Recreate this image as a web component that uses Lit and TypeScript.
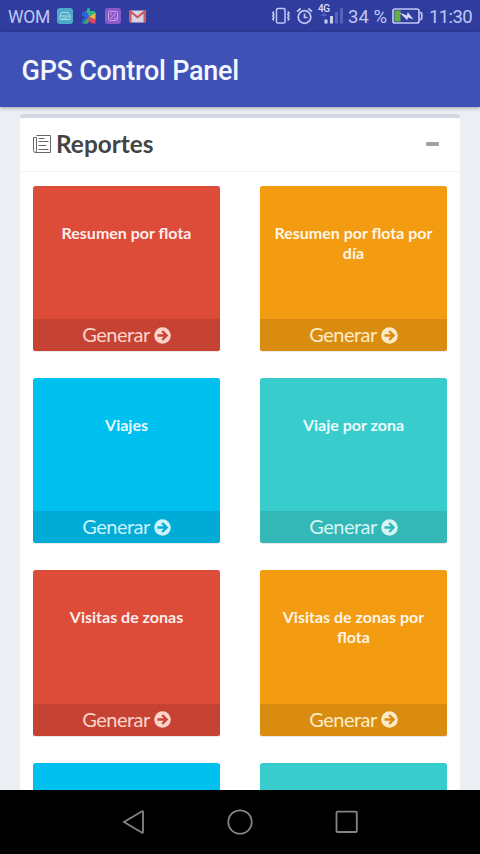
import { LitElement, css, html, svg } from "lit";
import { customElement, property } from "lit/decorators.js";

interface Report {
  title: string;
  color: "red" | "yellow" | "aqua" | "teal";
}

const REPORTS: Report[] = [
  { title: "Resumen por flota", color: "red" },
  { title: "Resumen por flota por día", color: "yellow" },
  { title: "Viajes", color: "aqua" },
  { title: "Viaje por zona", color: "teal" },
  { title: "Visitas de zonas", color: "red" },
  { title: "Visitas de zonas por flota", color: "yellow" },
  { title: "", color: "aqua" },
  { title: "", color: "teal" },
];

@customElement("gps-status-bar")
export class StatusBarElement extends LitElement {
  render() {
    return html`
      <span class="carrier">WOM</span>
      <svg class="app" width="16" height="16" viewBox="0 0 16 16">
        <rect width="16" height="16" rx="3" fill="#4fa9c9" />
        <path
          d="M3 11.5V8l1.5-3.5h7L13 8v3.5zM3.5 8h9M5.5 10h5"
          fill="none"
          stroke="#a5dbe8"
        />
      </svg>
      <svg class="app" width="16" height="16" viewBox="0 0 16 16">
        <path d="M4 3h2Q5.500 0 7.500 0T9 3h5v3L8 9z" fill="#2bb59a" />
        <path d="M1 4h5l2.500 5-6 6.500H1v-4c3.500 0 3.500-3.500 0-3.500z" fill="#2d62d8" />
        <path d="M8 4h6.500v3L8 9.500z" fill="#35b479" />
        <path d="M8 9l6.500-4v7z" fill="#efb844" />
        <path d="M2 15.500L8 8.500l6.500 3v4h-4c0-2.500-3.500-2.500-3.500 0z" fill="#e0455f" />
        <path d="M1.500 15.500L8 9l-1 6.500z" fill="#2fae68" />
      </svg>
      <svg class="app" width="16" height="16" viewBox="0 0 16 16">
        <rect width="16" height="16" rx="3" fill="#8c5bc9" />
        <rect
          x="3.500"
          y="3.500"
          width="9"
          height="9"
          rx="1"
          fill="none"
          stroke="#c5a0e8"
        />
        <path d="M5 11l6-6M5 6h2M9 10.500h2.500" stroke="#c5a0e8" />
      </svg>
      <svg class="mail" width="17" height="13" viewBox="0 0 17 13">
        <rect x=".5" y=".5" width="16" height="12" rx="1" fill="#d9d3e4" />
        <path d="M1.500 12.500V1.500l7 5.800 7-5.800v11" fill="none" stroke="#c9545c" stroke-width="2" />
      </svg>

      <span class="spacer"></span>

      <svg class="vibrate" width="20" height="18" viewBox="0 0 20 18">
        <rect x="5.500" y="1.500" width="8.500" height="14.500" rx="1.300" />
        <path d="M3 4.500L1.700 6 3 7.500 1.700 9 3 10.500 1.700 12 3 13.500M16.700 4.500L18 6l-1.300 1.500L18 9l-1.300 1.500L18 12l-1.300 1.500" />
      </svg>
      <svg class="alarm" width="17" height="18" viewBox="0 0 17 18">
        <circle cx="8.500" cy="10" r="6.300" />
        <path d="M8.500 6.500v4h3M1 4.700L4.700 1.500M16 4.700l-3.700-3.200" />
      </svg>
      <span class="signal">
        <span class="network">4G</span>
        <svg width="26" height="21" viewBox="0 0 26 21">
          <path d="M3.500 12.500L6 10l2.500 2.500zM6 12v2" stroke="#5361b6" fill="#5361b6" />
          <rect x="6.500" y="16.500" width="3" height="4" fill="#c9d0f5" />
          <rect x="12" y="13" width="3" height="7.500" fill="#c9d0f5" />
          <rect x="17" y="9" width="3" height="11.500" fill="#5462b7" />
          <rect x="22" y="5" width="3" height="15.500" fill="#5462b7" />
        </svg>
      </span>
      <span class="percent">34 %</span>
      <svg class="battery" width="31" height="16" viewBox="0 0 31 16">
        <rect x="2.500" y="2.500" width="6" height="11" fill="#69b044" stroke="none" />
        <rect x="1" y="1" width="26" height="14" rx="2" />
        <path d="M28 4.500q1.800 0 1.800 1.500v4q0 1.500-1.800 1.500" />
        <path d="M7.500 4.500l7.500 3 .7-3.500L21.500 11.500l-5.500-2-.8 2.800z" fill="#d3d8f6" stroke="none" />
      </svg>
      <span class="time">11:30</span>
    `;
  }

  static styles = css`
    :host {
      display: flex;
      align-items: center;
      flex: none;
      height: 32px;
      box-sizing: border-box;
      padding: 0 8px;
      background: #303d9f;
      color: #bfc7f2;
      font: 18px/32px Roboto, sans-serif;
      white-space: nowrap;
    }
    svg {
      flex: none;
      display: block;
    }
    .carrier {
      width: 42px;
      margin-right: 7px;
      padding-top: 2px;
      font-size: 17.5px;
      letter-spacing: -0.3px;
    }
    .app {
      margin-right: 8px;
    }
    .spacer {
      flex: 1;
    }
    .vibrate,
    .alarm,
    .battery {
      fill: none;
      stroke: #bfc7f2;
      stroke-width: 1.7;
    }
    .vibrate {
      margin-right: 5px;
      stroke-width: 1.5;
    }
    .alarm {
      margin-right: 5px;
    }
    .signal {
      position: relative;
      margin: 0 4px 5px 0;
    }
    .network {
      position: absolute;
      top: 1px;
      left: 0;
      font: 500 10px/10px Roboto, sans-serif;
      letter-spacing: -0.5px;
      color: #dde1fa;
    }
    .percent {
      width: 40px;
      margin-right: 4px;
      padding-top: 2px;
      font-size: 18.5px;
    }
    .battery {
      margin-right: 6px;
    }
    .time {
      width: 43px;
      padding-top: 2px;
      font-size: 18.5px;
      letter-spacing: -0.6px;
    }
  `;
}

@customElement("gps-report-tile")
export class ReportTileElement extends LitElement {
  @property({ type: String })
  heading = "";

  @property({ type: String, reflect: true })
  color: Report["color"] = "red";

  render() {
    return html`
      <div class="inner">${this.heading}</div>
      ${this.heading
        ? html`
            <div class="footer">
              <span>Generar</span>
              <svg width="17" height="17" viewBox="0 0 17 17">
                <circle cx="8.500" cy="8.500" r="8.300" />
                <path d="M3.500 8.500h9M8.200 4l4.500 4.500L8.200 13" />
              </svg>
            </div>
          `
        : null}
    `;
  }

  static styles = css`
    :host {
      --tile-color: #dd4b39;
      --tile-icon: #fbd5cc;
      display: flex;
      flex-direction: column;
      height: 165.2px;
      border-radius: 2.5px;
      overflow: hidden;
      background: var(--tile-color);
      box-shadow: 0 1px 1px rgba(0, 0, 0, 0.1);
      text-align: center;
    }
    :host([color="yellow"]) {
      --tile-color: #f39c12;
      --tile-icon: #fdebc8;
    }
    :host([color="aqua"]) {
      --tile-color: #00c0ef;
      --tile-icon: #ccf2fc;
    }
    :host([color="teal"]) {
      --tile-color: #39cccc;
      --tile-icon: #d7f5f5;
    }
    .inner {
      flex: 1;
      padding: 37px 10px 0;
      color: rgba(255, 255, 255, 0.93);
      font-size: 16px;
      font-weight: 700;
      line-height: 20px;
    }
    .footer {
      display: flex;
      justify-content: center;
      align-items: center;
      gap: 4px;
      height: 32px;
      background: rgba(0, 0, 0, 0.1);
      color: var(--tile-icon);
      font-size: 20px;
      letter-spacing: -0.55px;
      line-height: 31px;
    }
    .footer span {
      margin-bottom: 1px;
    }
    circle {
      fill: var(--tile-icon);
    }
    path {
      fill: none;
      stroke: color-mix(in srgb, var(--tile-color) 90%, black);
      stroke-width: 2.3;
    }
  `;
}

@customElement("app-root")
export class AppRootElement extends LitElement {
  private _renderNavIcon(shape: unknown) {
    return html`
      <svg width="28" height="28" viewBox="0 0 28 28">${shape}</svg>
    `;
  }

  render() {
    return html`
      <gps-status-bar></gps-status-bar>
      <header>GPS Control Panel</header>
      <main>
        <section class="box">
          <div class="box-header">
            <svg width="19" height="20" viewBox="0 0 19 20">
              <path d="M3.500 1.500h14v17h-15q-2 0-2-2v-13h3v13q0 2-1.500 2" />
              <path d="M5.500 4.500h6M5.500 7.500h10M5.500 11.500h8M5.500 15.500h10" />
            </svg>
            <h3>Reportes</h3>
            <span class="collapse"></span>
          </div>
          <div class="tiles">
            ${REPORTS.map(
              (report) => html`
                <gps-report-tile
                  .heading=${report.title}
                  .color=${report.color}
                ></gps-report-tile>
              `,
            )}
          </div>
        </section>
      </main>
      <nav>
        ${this._renderNavIcon(
          svg`<path d="M4 14L22 3.300Q23 3 23 4V24Q23 25 22 24.700Z" />`,
        )}
        ${this._renderNavIcon(svg`<circle cx="14" cy="14" r="11.700" />`)}
        ${this._renderNavIcon(
          svg`<rect x="3.500" y="3.700" width="20.300" height="20.300" rx="1" />`,
        )}
      </nav>
    `;
  }

  static styles = css`
    :host {
      display: flex;
      flex-direction: column;
      height: 854px;
      overflow: hidden;
      background: #ecf0f5;
      font-family: Lato, sans-serif;
    }
    header {
      flex: none;
      height: 74.5px;
      box-sizing: border-box;
      padding: 2px 21.5px 0;
      background: #3f51b5;
      box-shadow: 0 1px 4px rgba(0, 0, 0, 0.35);
      color: #f2f6ff;
      font: 500 27px/75px Roboto, sans-serif;
      letter-spacing: -0.26px;
      z-index: 1;
    }
    main {
      flex: 1;
      min-height: 0;
      overflow: hidden;
      padding: 7.5px 20px 0;
    }
    .box {
      border-top: 4px solid #d2d6de;
      border-radius: 4px;
      background: #fff;
      box-shadow: 0 1px 1px rgba(0, 0, 0, 0.1);
    }
    .box-header {
      display: flex;
      align-items: center;
      height: 53px;
      padding: 0 21px 0 13px;
      border-bottom: 1px solid #f4f4f4;
      color: #444;
    }
    .box-header svg {
      margin: 0 4px 2px 0;
      fill: none;
      stroke: #666;
      stroke-width: 1;
    }
    h3 {
      flex: 1;
      margin: 0 0 2px;
      font-size: 24.4px;
      font-weight: 700;
      line-height: 28px;
    }
    .collapse {
      width: 13px;
      height: 4px;
      margin-bottom: 2px;
      border-radius: 1px;
      background: #a0a2a8;
    }
    .tiles {
      display: grid;
      grid-template-columns: 187px 187px;
      justify-content: space-between;
      row-gap: 27px;
      padding: 14px 13px;
    }
    nav {
      display: flex;
      flex: none;
      justify-content: center;
      align-items: center;
      gap: 78.5px;
      height: 64px;
      background: #000;
      z-index: 1;
    }
    nav svg {
      fill: none;
      stroke: #858585;
      stroke-width: 1.8;
    }
  `;
}

declare global {
  interface HTMLElementTagNameMap {
    "app-root": AppRootElement;
    "gps-report-tile": ReportTileElement;
    "gps-status-bar": StatusBarElement;
  }
}
